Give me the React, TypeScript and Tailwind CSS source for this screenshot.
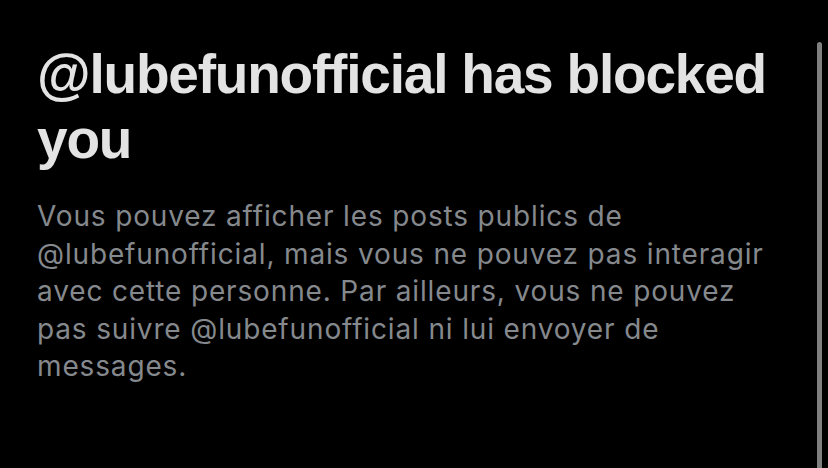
export default function App() {
  return (
    <div className="relative w-[828px] h-[468px] overflow-hidden bg-black">
      <div className="pl-[37px] pt-[42px] pr-[40px]">
        <h1
          className="text-[55px] leading-[65px] font-bold text-[#e3e3e3] tracking-[-1.2px] whitespace-nowrap"
          style={{ fontFamily: '"Liberation Sans", Arial, sans-serif' }}
        >
          @lubefunofficial has blocked
          <br />
          you
        </h1>
        <p
          className="mt-[26px] text-[28px] leading-[37.5px] text-[#85898d] tracking-[0.85px] whitespace-nowrap"
          style={{ fontFamily: 'Inter, "Liberation Sans", Arial, sans-serif' }}
        >
          Vous pouvez afficher les posts publics de
          <br />
          @lubefunofficial, mais vous ne pouvez pas interagir
          <br />
          avec cette personne. Par ailleurs, vous ne pouvez
          <br />
          pas suivre @lubefunofficial ni lui envoyer de
          <br />
          messages.
        </p>
      </div>
      <div className="absolute left-[817px] top-[42px] w-[5px] h-[440px] rounded-full bg-[#7f7f7f]" />
    </div>
  );
}
